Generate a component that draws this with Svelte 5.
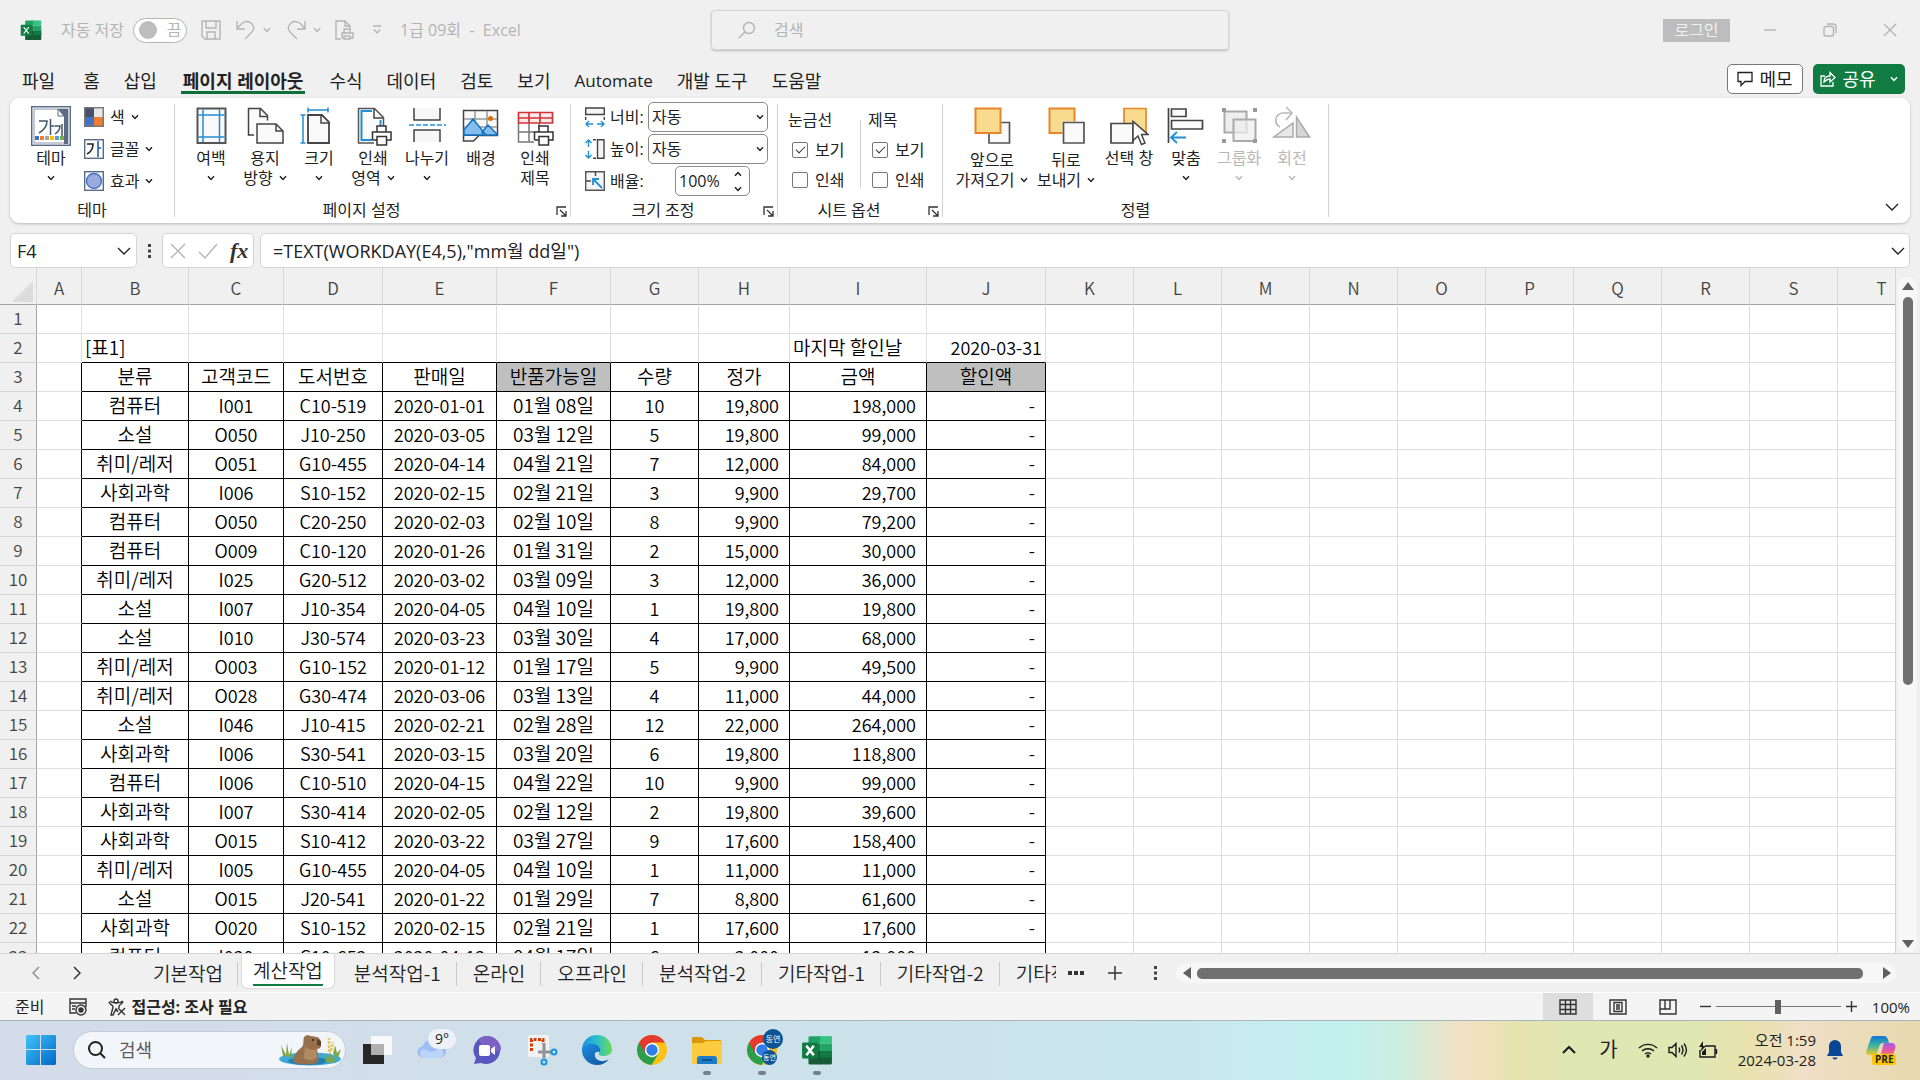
<script>
	const menuTabs = ['파일', '홈', '삽입', '페이지 레이아웃', '수식', '데이터', '검토', '보기', 'Automate', '개발 도구', '도움말'];

	const themeItems = [
		{ icon: 'colors', label: '색' },
		{ icon: 'fonts', label: '글꼴' },
		{ icon: 'effects', label: '효과' }
	];

	const pageItems = [
		{ icon: 'margins', lines: ['여백'], drop: 'below' },
		{ icon: 'orient', lines: ['용지', '방향'], drop: 'side' },
		{ icon: 'size', lines: ['크기'], drop: 'below' },
		{ icon: 'area', lines: ['인쇄', '영역'], drop: 'side' },
		{ icon: 'breaks', lines: ['나누기'], drop: 'below' },
		{ icon: 'background', lines: ['배경'] },
		{ icon: 'titles', lines: ['인쇄', '제목'] }
	];

	const arrangeItems = [
		{ icon: 'forward', lines: ['앞으로', '가져오기'], drop: 'side', size: 'w80' },
		{ icon: 'backward', lines: ['뒤로', '보내기'], drop: 'side', size: 'w68' },
		{ icon: 'pane', lines: ['선택 창'], size: 'w58' },
		{ icon: 'align', lines: ['맞춤'], drop: 'below', size: 'w56' },
		{ icon: 'group', lines: ['그룹화'], drop: 'below', size: 'w50', disabled: true },
		{ icon: 'rotate', lines: ['회전'], drop: 'below', size: 'w56', disabled: true }
	];

	const columns = [
		['A', 45], ['B', 107], ['C', 95], ['D', 99], ['E', 114], ['F', 114], ['G', 88], ['H', 91], ['I', 137], ['J', 119],
		['K', 88], ['L', 88], ['M', 88], ['N', 88], ['O', 88], ['P', 88], ['Q', 88], ['R', 88], ['S', 88], ['T', 88]
	];
	const tableWidth = 37 + columns.reduce((sum, c) => sum + c[1], 0);

	const rows = [
		[],
		['[표1]', '', '', '', '', '', '', '마지막 할인날', '2020-03-31'],
		['분류', '고객코드', '도서번호', '판매일', '반품가능일', '수량', '정가', '금액', '할인액'],
		['컴퓨터', 'I001', 'C10-519', '2020-01-01', '01월 08일', '10', '19,800', '198,000', '-'],
		['소설', 'O050', 'J10-250', '2020-03-05', '03월 12일', '5', '19,800', '99,000', '-'],
		['취미/레저', 'O051', 'G10-455', '2020-04-14', '04월 21일', '7', '12,000', '84,000', '-'],
		['사회과학', 'I006', 'S10-152', '2020-02-15', '02월 21일', '3', '9,900', '29,700', '-'],
		['컴퓨터', 'O050', 'C20-250', '2020-02-03', '02월 10일', '8', '9,900', '79,200', '-'],
		['컴퓨터', 'O009', 'C10-120', '2020-01-26', '01월 31일', '2', '15,000', '30,000', '-'],
		['취미/레저', 'I025', 'G20-512', '2020-03-02', '03월 09일', '3', '12,000', '36,000', '-'],
		['소설', 'I007', 'J10-354', '2020-04-05', '04월 10일', '1', '19,800', '19,800', '-'],
		['소설', 'I010', 'J30-574', '2020-03-23', '03월 30일', '4', '17,000', '68,000', '-'],
		['취미/레저', 'O003', 'G10-152', '2020-01-12', '01월 17일', '5', '9,900', '49,500', '-'],
		['취미/레저', 'O028', 'G30-474', '2020-03-06', '03월 13일', '4', '11,000', '44,000', '-'],
		['소설', 'I046', 'J10-415', '2020-02-21', '02월 28일', '12', '22,000', '264,000', '-'],
		['사회과학', 'I006', 'S30-541', '2020-03-15', '03월 20일', '6', '19,800', '118,800', '-'],
		['컴퓨터', 'I006', 'C10-510', '2020-04-15', '04월 22일', '10', '9,900', '99,000', '-'],
		['사회과학', 'I007', 'S30-414', '2020-02-05', '02월 12일', '2', '19,800', '39,600', '-'],
		['사회과학', 'O015', 'S10-412', '2020-03-22', '03월 27일', '9', '17,600', '158,400', '-'],
		['취미/레저', 'I005', 'G10-455', '2020-04-05', '04월 10일', '1', '11,000', '11,000', '-'],
		['소설', 'O015', 'J20-541', '2020-01-22', '01월 29일', '7', '8,800', '61,600', '-'],
		['사회과학', 'O020', 'S10-152', '2020-02-15', '02월 21일', '1', '17,600', '17,600', '-'],
		['컴퓨터', 'I020', 'C10-652', '2020-04-12', '04월 17일', '6', '2,000', '12,000', '-']
	];

	const sheets = ['기본작업', '계산작업', '분석작업-1', '온라인', '오프라인', '분석작업-2', '기타작업-1', '기타작업-2', '기타작업-3'];

	const apps = [
		{ icon: 'taskview', label: '작업 보기' },
		{ icon: 'weather', label: '날씨' },
		{ icon: 'chat', label: '채팅' },
		{ icon: 'snip', label: '캡처 도구' },
		{ icon: 'edge', label: 'Edge' },
		{ icon: 'chrome', label: 'Chrome' },
		{ icon: 'folder', label: '파일 탐색기', open: true },
		{ icon: 'chrome2', label: 'Chrome', open: true },
		{ icon: 'excel', label: 'Excel', open: true }
	];

	let fitWidth = $state('자동');
	let fitHeight = $state('자동');
	let scale = $state('100%');
	let formula = $state('=TEXT(WORKDAY(E4,5),"mm월 dd일")');
	let cellName = $state('F4');
	let zoomLevel = $state(50);

	// c is the zero-based column, r the zero-based row
	function cellClass(r, c) {
		const list = [];
		const inTable = c >= 1 && c <= 9;
		if (r >= 2 && inTable) list.push('boxed');
		if (r === 1 && inTable) list.push('over');
		if (r >= 2 && c === 0) list.push('before');
		if (r === 2 && (c === 5 || c === 9)) list.push('shade');
		if (r === 2 || (r > 2 && (c === 1 || c === 5)) || (r === 1 && c < 9)) list.push('hangul');
		if (r === 1 && c === 9) list.push('right');
		if (r === 1 && c < 9) list.push('left');
		if (r > 2 && c >= 7) list.push('num');
		return list.join(' ');
	}
</script>

{#snippet chev()}
	<svg class="chev" width="8" height="6" viewBox="0 0 8 6"><path d="M1 1.2 4 4.4 7 1.2" fill="none" stroke="currentColor" stroke-width="1.5" /></svg>
{/snippet}

{#snippet bigChev()}
	<svg width="14" height="8" viewBox="0 0 14 8"><path d="M1 1 7 7l6-6" fill="none" stroke="currentColor" stroke-width="1.4" /></svg>
{/snippet}

{#snippet launcher()}
	<button class="launcher" aria-label="대화 상자">
		<svg width="11" height="11" viewBox="0 0 11 11" fill="none" stroke="#333" stroke-width="1.3"><path d="M1 9V1h9M4 4l5.5 5.5M10 5v5H5" /></svg>
	</button>
{/snippet}

{#snippet excelLogo(size)}
	<svg width={size} height={size} viewBox="0 0 30 30">
		<path d="M8 2h11v7H7V3z" fill="#21a366" />
		<path d="M18 2h11v7H18z" fill="#33c481" />
		<path d="M7 9h11v7H7z" fill="#107c41" />
		<path d="M18 9h11v7H18z" fill="#21a366" />
		<path d="M7 16h22v11.500a1 1 0 0 1-1 1H8a1 1 0 0 1-1-1z" fill="#185c37" />
		<path d="M18 16h11v6H18z" fill="#107c41" />
		<rect x="1" y="8" width="15" height="15" rx="1" fill="#107c41" />
		<path d="m5 11 7 9M12 11l-7 9" stroke="#fff" stroke-width="2.400" />
	</svg>
{/snippet}

{#snippet chromeLogo()}
	<circle cx="15" cy="15" r="15" fill="#fbc116" />
	<path d="M15 15 2 7.500A15 15 0 0 0 14.500 30L21.500 18.700z" fill="#2c9e4b" />
	<path d="M2 7.500A15 15 0 0 1 28 7.500H15L8.500 18.700z" fill="#e33b2e" />
	<circle cx="15" cy="15" r="7.200" fill="#fff" />
	<circle cx="15" cy="15" r="5.700" fill="#2f7de9" />
{/snippet}

{#snippet ribbonIcon(name)}
	<svg width="40" height="40" viewBox="0 0 40 40" fill="none" stroke-width="1.500">
		{#if name === 'theme'}
			<rect x=".7" y=".7" width="38.600" height="38.600" fill="#fff" stroke="#5b6b86" />
			<rect x="3" y="3" width="34" height="34" stroke="#8b97ab" stroke-width="1" />
			<path d="M27 3h10v35h-4V10z" fill="#5b6b86" />
			<path d="M27 3v7h6z" fill="#fff" stroke="#5b6b86" stroke-width="1" />
			<path d="M8 15h8c0 6-3 9-8 12M19.500 13v16M19.500 20h4M24 20h5c0 4-2 6-5 8M31 18v12" stroke="#44546a" />
			<path d="M4 30h4v4H4z" fill="#4472c4" /><path d="M9 30h4v4H9z" fill="#ed7d31" /><path d="M14 30h4v4h-4z" fill="#a5a5a5" />
			<path d="M19 30h4v4h-4z" fill="#ffc000" /><path d="M24 30h4v4h-4z" fill="#5b9bd5" /><path d="M29 30h4v4h-4z" fill="#70ad47" />
		{:else if name === 'margins'}
			<rect x="6.500" y="2.500" width="28" height="34.500" fill="#fafafa" stroke="#555" stroke-width="2" />
			<path d="M12 3.500V36M28.500 3.500V36M7.500 9h26M7.500 31h26" stroke="#1f8fd6" />
		{:else if name === 'orient'}
			<path d="M9 29H3.500V2.500h12l7 7v5" fill="#fafafa" stroke="#444" /><path d="M15 2.500v8h8" stroke="#444" />
			<path d="M12 18h19l7 7v12H12z" fill="#fafafa" stroke="#444" /><path d="M31 18v7h7" stroke="#444" />
		{:else if name === 'size'}
			<path d="M9 9h14l7 7v21H9z" fill="#fafafa" stroke="#444" stroke-width="1.800" /><path d="M22 9v8h8" stroke="#444" />
			<path d="M9 4h20M9 1.500v5M29 1.500v5M4 9v28M1.500 9h5M1.500 37h5" stroke="#1f8fd6" />
		{:else if name === 'area'}
			<path d="M21 37H5.500V2.500h16l9 9V20" fill="#fafafa" stroke="#555" /><path d="M21 2.500V12h9" stroke="#444" />
			<path d="M19 34H8.500V5H19M27.500 14v6" stroke="#1f8fd6" stroke-width="2" />
			<path d="M24 26v-6h9v6M19.500 34v-8h18.500v8h-4M19.500 34h4.500M24 30.500h9.500V39H24z" fill="#fff" stroke="#333" />
		{:else if name === 'breaks'}
			<path d="M7 2v12h26V2M7 36V24h26v12" fill="#f7f7f7" stroke="#444" />
			<path d="M2 19h37" stroke="#1f8fd6" stroke-dasharray="5 2" />
		{:else if name === 'background'}
			<rect x="2.500" y="4.500" width="34" height="25" fill="#fafafa" stroke="#444" />
			<path d="M14 5v10M26 5v24M3 13h33M3 21h33" stroke="#999" />
			<path d="m3 24 9-11 13 16H3zM21 26l6-7 9 9v1H22z" fill="#83beec" stroke="#1272c4" />
			<circle cx="29.500" cy="12.500" r="2.500" fill="#e06c00" />
			<path d="M2.500 30v5h10l5-5" fill="#f7f7f7" stroke="#444" />
		{:else if name === 'titles'}
			<path d="M3.500 17v19H19M14 17v19M24 17v6M4 26h15" stroke="#777" />
			<path d="M3.500 6.500h34V17h-34zM14 7v10M25 7v10M4 12h33" fill="#fbeaea" stroke="#d13438" stroke-width="1.700" />
			<path d="M24 26v-6h9v6M19.500 34v-8h18.500v8h-4M19.500 34h4.500M24 30.500h9.500V39H24z" fill="#fff" stroke="#333" />
		{:else if name === 'forward'}
			<path d="M17 16.500h20.500V37H17z" fill="#fafafa" stroke="#555" stroke-width="1.700" />
			<path d="M3.500 2.500h25V27h-25z" fill="#f8db8f" stroke="#e8852b" stroke-width="2" />
		{:else if name === 'backward'}
			<path d="M3.500 2.500h25V27h-25z" fill="#f8db8f" stroke="#e8852b" stroke-width="2" />
			<path d="M16.500 15.500H39V38H16.500z" fill="#fff" />
			<path d="M17.500 16.500h20.500V37H17.500z" fill="#fafafa" stroke="#555" stroke-width="1.700" />
		{:else if name === 'pane'}
			<path d="M15 2.500h22V27H15z" fill="#f8db8f" stroke="#e8852b" stroke-width="1.700" />
			<path d="M2 17.500h22V37H2z" fill="#fafafa" stroke="#444" stroke-width="1.700" />
			<path d="M24 15.500v19l5-4.500 3.500 8.500 3.500-1.500-3.500-8.500h6.500z" fill="#fff" stroke="#444" stroke-width="1.500" />
		{:else if name === 'align'}
			<path d="M2.500 2v35" stroke="#444" stroke-width="1.700" />
			<path d="M5.500 3h14.500v7.500H5.500zM5.500 14.500H36.500V23H5.500z" fill="#fafafa" stroke="#444" stroke-width="1.700" />
			<path d="M20 31.500H6M11 26l-6 5.500 6 5.500" stroke="#1f8fd6" stroke-width="1.800" />
		{:else if name === 'group'}
			<path d="M5.500 5.500h22v21h-22z" fill="#eee" stroke="#aaa" stroke-width="2" />
			<path d="M14.500 13.500h22V35h-22z" fill="#eee" fill-opacity=".7" stroke="#aaa" stroke-width="2" />
			<path d="M3 2h4v4H3zM34 2h4v4h-4zM3 33h4v4H3zM34 33h4v4h-4z" fill="#999" />
		{:else if name === 'rotate'}
			<path d="M8 21c-6-3-6-13 3-14h8M14 1l6 6-6 7" stroke="#bbb" stroke-width="1.700" />
			<path d="M21 17v14H2z" fill="#e8e8e8" stroke="#aaa" /><path d="M24.500 11v20h13z" fill="#d5d5d5" stroke="#aaa" />
		{/if}
	</svg>
{/snippet}

{#snippet smallIcon(name)}
	<svg width="20" height="20" viewBox="0 0 20 20" fill="none" stroke-width="1.400">
		{#if name === 'colors'}
			<path d="M0 0h10v10H0z" fill="#44546a" /><path d="M10 0h10v10H10z" fill="#e7e6e6" /><path d="M0 10h10v10H0z" fill="#4472c4" /><path d="M10 10h10v10H10z" fill="#ed7d31" />
			<rect x=".7" y=".7" width="18.600" height="18.600" stroke="#777" />
		{:else if name === 'fonts'}
			<rect x=".7" y=".7" width="18.600" height="18.600" fill="#fff" stroke="#5b6b86" />
			<path d="M3 5h6c0 5-2 8-6 10" stroke="#222" stroke-width="1.600" /><path d="M14 2v16M14 9h3" stroke="#1f5fb0" stroke-width="1.600" />
		{:else if name === 'effects'}
			<rect x=".7" y=".7" width="18.600" height="18.600" fill="#fff" stroke="#5b6b86" />
			<circle cx="10" cy="10" r="7.500" fill="#9aaade" stroke="#4472c4" />
		{:else if name === 'fitw'}
			<path d="M.7 1h18.600v6.500H.7z" fill="#f5f5f5" stroke="#444" /><path d="M.7 10v3M19.300 10v3" stroke="#444" />
			<path d="M8 17H1.500M4 14l-3 3 3 3M12 17h6.500M16 14l3 3-3 3" stroke="#1f8fd6" />
		{:else if name === 'fith'}
			<path d="M12.500.7H19v18.600h-6.500z" fill="#f5f5f5" stroke="#444" /><path d="M8 .7h3M8 19.300h3" stroke="#444" />
			<path d="M3.500 8V1.500M.5 4l3-3 3 3M3.500 12v6.500M.5 16l3 3 3-3" stroke="#1f8fd6" />
		{:else if name === 'scale'}
			<path d="M.7.7h18.600v18.600H.7z" fill="#f5f5f5" stroke="#555" /><path d="M1 10h5M10.500 1v4" stroke="#444" />
			<path d="m17 17-9-9M8 14V8h6" stroke="#1f8fd6" stroke-width="1.800" />
		{/if}
	</svg>
{/snippet}

{#snippet largeButton(item)}
	<button class="large {item.size ?? ''}" disabled={item.disabled}>
		{@render ribbonIcon(item.icon)}
		<span>{item.lines[0]}</span>
		<span class="second">
			{item.lines[1] ?? ''}
			{#if item.drop}{@render chev()}{/if}
		</span>
	</button>
{/snippet}

{#snippet appIcon(name)}
	{#if name === 'excel'}
		{@render excelLogo(32)}
	{:else}
		<svg width="30" height="30" viewBox="0 0 30 30" overflow="visible">
			{#if name === 'taskview'}
				<path d="M1 9h21v20H1z" fill="#272727" /><path d="M9 1h21v19H9z" fill="#f8f8f8" /><path d="M9 9h13v11H9z" fill="#b0b0b0" />
			{:else if name === 'weather'}
				<path d="M7 23a6 6 0 0 1-1-12 8 8 0 0 1 15-2 7 7 0 0 1 2 14z" fill="#9dbdf5" />
				<path d="M6 23a5 5 0 0 1 0-9c4 0 6 3 9 3s5-4 9-3a5 5 0 0 1-1 9z" fill="#bcd3fa" />
			{:else if name === 'chat'}
				<path d="M15 1a14 14 0 1 1-6 27l-7 1 2-6A14 14 0 0 1 15 1z" fill="#5b57c0" />
				<path d="M15 1a14 14 0 0 1 14 14c-8 4-20-2-22-11a14 14 0 0 1 8-3z" fill="#7b62c4" />
				<rect x="7" y="10" width="11" height="11" rx="2" fill="#fff" /><path d="m19 14 4-3v9l-4-3z" fill="#fff" />
			{:else if name === 'snip'}
				<rect x="1" y="0" width="21" height="22" rx="2" fill="#f2f2f2" />
				<path d="M4.500 16V4.500H16V9" fill="none" stroke="#d83b01" stroke-width="3" stroke-dasharray="3 1.500" />
				<path d="M17 8v15M11 17h14" stroke="#8d9296" stroke-width="3" />
				<circle cx="27" cy="17" r="2.500" fill="none" stroke="#1596dd" stroke-width="2" /><circle cx="17" cy="27" r="2.500" fill="none" stroke="#1596dd" stroke-width="2" />
			{:else if name === 'edge'}
				<defs>
					<linearGradient id="edgeTop" x1="0" x2="1"><stop offset="0" stop-color="#1b8fe0" /><stop offset=".5" stop-color="#2cbfd0" /><stop offset="1" stop-color="#6bdc50" /></linearGradient>
					<linearGradient id="edgeLow" x1="0" y1="0" x2="1" y2="1"><stop offset="0" stop-color="#1f8fe0" /><stop offset="1" stop-color="#0d4f9e" /></linearGradient>
				</defs>
				<path d="M15 0a15 15 0 0 1 15 14c0 5-4 7-8 7-4 0-6-1-5-3 2-3 0-7-5-7C6 11 2 14 0 17A15 15 0 0 1 15 0z" fill="url(#edgeTop)" />
				<path d="M0 16c1-5 6-8 11-7 5 0 8 4 7 8-4-1-6 1-5 4 1 5 8 7 14 3a15 15 0 0 1-12 6A15 15 0 0 1 0 16z" fill="url(#edgeLow)" />
			{:else if name === 'chrome'}
				{@render chromeLogo()}
			{:else if name === 'folder'}
				<path d="M0 3a1 1 0 0 1 1-1h9l3 3h16v6H0z" fill="#d9970a" />
				<path d="M0 8h11l3-2h16v22a1 1 0 0 1-1 1H1a1 1 0 0 1-1-1z" fill="#fcca3e" />
				<path d="M5 29v-5a3 3 0 0 1 3-3h14a3 3 0 0 1 3 3v5z" fill="#1c7cc9" /><path d="M10 25h10" stroke="#0b4a80" stroke-width="1.500" />
			{:else if name === 'chrome2'}
				{@render chromeLogo()}
				<circle cx="26" cy="4" r="10" fill="#0d5494" /><circle cx="22.500" cy="22.500" r="7.500" fill="#0d5494" />
				<text x="26" y="7" fill="#fff" font-size="8" text-anchor="middle">동연</text>
				<text x="22.500" y="25" fill="#fff" font-size="7" text-anchor="middle">동연</text>
			{/if}
		</svg>
	{/if}
{/snippet}

<div class="window">
	<header class="titlebar">
		<div class="quick">
			{@render excelLogo(22)}
			<label class="autosave">자동 저장 <button class="toggle" role="switch" aria-checked="false"><i></i>끔</button></label>
			<button class="q save" aria-label="저장"><svg width="20" height="20" viewBox="0 0 20 20"><path d="M1 1h18v18H4l-3-3zM5 1v7h10V1M6 19v-7h8v7" /></svg></button>
			<button class="q undo" aria-label="실행 취소"><svg width="20" height="20" viewBox="0 0 20 20"><path d="M1 1v8h8M1.500 8.500C6 1 12 0 15.500 3.500c4 4 2 7-1 10L9 19" /></svg>{@render chev()}</button>
			<button class="q redo" aria-label="다시 실행"><svg width="20" height="20" viewBox="0 0 20 20"><path d="M19 1v8h-8M18.500 8.500C14 1 8 0 4.500 3.500c-4 4-2 7 1 10L11 19" /></svg>{@render chev()}</button>
			<button class="q print" aria-label="인쇄 미리 보기"><svg width="20" height="20" viewBox="0 0 20 20"><path d="M6 19H1V1h9l5 5v3M10 1v5h5M9 13V9h6v4M7 18v-5h11v5h-3M7 18h2M9 16h6v3H9z" /></svg></button>
			<button class="q more" aria-label="사용자 지정"><svg width="10" height="10" viewBox="0 0 10 10"><path d="M1 1h8M2 4.500 5 8l3-3.500" /></svg></button>
			<span class="doc">1급 09회 &nbsp;-&nbsp; Excel</span>
		</div>
		<label class="search">
			<svg width="18" height="18" viewBox="0 0 18 18"><circle cx="11" cy="7" r="5.500" /><path d="m7 11-6 6" /></svg>
			<input type="text" placeholder="검색" aria-label="검색" />
		</label>
		<div class="winctl">
			<button class="login">로그인</button>
			<button aria-label="최소화"><svg width="14" height="14" viewBox="0 0 14 14"><path d="M1 7h12" /></svg></button>
			<button aria-label="이전 크기로"><svg width="14" height="14" viewBox="0 0 14 14"><rect x="1" y="3.500" width="9.500" height="9.500" rx="2" /><path d="M4 1h6a3 3 0 0 1 3 3v6" /></svg></button>
			<button aria-label="닫기"><svg width="14" height="14" viewBox="0 0 14 14"><path d="m1 1 12 12M13 1 1 13" /></svg></button>
		</div>
	</header>

	<nav class="menu">
		{#each menuTabs as tab, i}
			<button class:file={i === 0} class:active={i === 3} class:latin={tab === 'Automate'}>{tab}</button>
		{/each}
		<div class="share">
			<button class="memo"><svg width="16" height="16" viewBox="0 0 16 16"><path d="M1 1.500h14v9H8l-4 4v-4H1z" /></svg>메모</button>
			<button class="green"><svg width="16" height="16" viewBox="0 0 16 16"><path d="M5 5H1v10h12v-4M4 11c0-4 2-6 6-6V1.500L15 6.500 10 11V8c-3 0-4 1-6 3z" /></svg>공유{@render chev()}</button>
		</div>
	</nav>

	<section class="ribbon">
		<div class="group themes">
			<div class="body">
				{@render largeButton({ icon: 'theme', lines: ['테마'], drop: 'below' })}
				<div class="stack">
					{#each themeItems as item}
						<button class="small">{@render smallIcon(item.icon)}<span>{item.label}</span>{@render chev()}</button>
					{/each}
				</div>
			</div>
			<footer>테마</footer>
		</div>

		<div class="group page">
			<div class="body">
				{#each pageItems as item}{@render largeButton(item)}{/each}
			</div>
			<footer>페이지 설정{@render launcher()}</footer>
		</div>

		<div class="group fit">
			<div class="body stack">
				<div class="field">
					{@render smallIcon('fitw')}<label for="fitw">너비:</label>
					<div class="combo"><select id="fitw" bind:value={fitWidth}><option>자동</option><option>1페이지</option></select>{@render chev()}</div>
				</div>
				<div class="field">
					{@render smallIcon('fith')}<label for="fith">높이:</label>
					<div class="combo"><select id="fith" bind:value={fitHeight}><option>자동</option><option>1페이지</option></select>{@render chev()}</div>
				</div>
				<div class="field">
					{@render smallIcon('scale')}<label for="scale">배율:</label>
					<div class="spin">
						<input id="scale" type="text" bind:value={scale} />
						<div>
							<button class="up" aria-label="늘리기">{@render chev()}</button>
							<button aria-label="줄이기">{@render chev()}</button>
						</div>
					</div>
				</div>
			</div>
			<footer>크기 조정{@render launcher()}</footer>
		</div>

		<div class="group sheetopt">
			<div class="body">
				{#each ['눈금선', '제목'] as title}
					<fieldset>
						<legend>{title}</legend>
						<label><input type="checkbox" checked />보기</label>
						<label><input type="checkbox" />인쇄</label>
					</fieldset>
				{/each}
			</div>
			<footer>시트 옵션{@render launcher()}</footer>
		</div>

		<div class="group arrange">
			<div class="body">
				{#each arrangeItems as item}{@render largeButton(item)}{/each}
			</div>
			<footer>정렬</footer>
		</div>
		<button class="collapse" aria-label="리본 축소">{@render bigChev()}</button>
	</section>

	<section class="formulabar">
		<label class="namebox"><input type="text" aria-label="이름 상자" bind:value={cellName} />{@render bigChev()}</label>
		<svg class="grip" width="4" height="16" viewBox="0 0 4 16"><path d="M0 1h3v3H0zM0 6.500h3v3H0zM0 12h3v3H0z" fill="#444" /></svg>
		<div class="fxbox">
			<button aria-label="취소"><svg width="16" height="16" viewBox="0 0 16 16"><path d="m1 1 14 14M15 1 1 15" stroke="#b5b5b5" /></svg></button>
			<button aria-label="입력"><svg width="20" height="16" viewBox="0 0 20 16"><path d="m1 9 6 6L19 1" stroke="#b5b5b5" /></svg></button>
			<button class="fx" aria-label="함수 삽입">fx</button>
		</div>
		<label class="formula"><input type="text" aria-label="수식" bind:value={formula} />{@render bigChev()}</label>
	</section>

	<main>
		<div class="sheet">
			<table style="width: {tableWidth}px">
				<colgroup>
					<col class="rowcol" />
					{#each columns as col}<col style="width: {col[1]}px" />{/each}
				</colgroup>
				<thead>
					<tr>
						<th class="corner"><svg width="21" height="21" viewBox="0 0 21 21"><path d="M21 0v21H0z" fill="#dcdcdc" /></svg></th>
						{#each columns as col}<th>{col[0]}</th>{/each}
					</tr>
				</thead>
				<tbody>
					{#each rows as row, r}
						<tr>
							<th>{r + 1}</th>
							{#each columns as _, c}
								<td class={cellClass(r, c)}>{row[c - 1] ?? ''}</td>
							{/each}
						</tr>
					{/each}
				</tbody>
			</table>
		</div>
		<div class="vscroll">
			<button aria-label="위로"><svg width="12" height="8" viewBox="0 0 12 8"><path d="M6 0l6 8H0z" /></svg></button>
			<div class="track"><div class="thumb"></div></div>
			<button aria-label="아래로"><svg width="12" height="8" viewBox="0 0 12 8"><path d="M6 8l6-8H0z" /></svg></button>
		</div>
	</main>

	<nav class="sheetbar">
		<button class="arrow dim" aria-label="이전 시트"><svg width="8" height="14" viewBox="0 0 8 14"><path d="M7 1 1 7l6 6" /></svg></button>
		<button class="arrow" aria-label="다음 시트"><svg width="8" height="14" viewBox="0 0 8 14"><path d="m1 1 6 6-6 6" /></svg></button>
		<div class="tabs">
			{#each sheets as name, i}
				<button class:active={i === 1} class:first={i === 0}><span>{name}</span></button>
			{/each}
		</div>
		<button class="dots" aria-label="시트 목록"><svg width="16" height="4" viewBox="0 0 16 4"><path d="M0 0h4v4H0zM6 0h4v4H6zM12 0h4v4h-4z" /></svg></button>
		<button class="plus" aria-label="새 시트"><svg width="14" height="14" viewBox="0 0 14 14"><path d="M7 0v14M0 7h14" /></svg></button>
		<svg class="vdots" width="4" height="14" viewBox="0 0 4 14"><path d="M0 0h3v3H0zM0 5.500h3v3H0zM0 11h3v3H0z" fill="#444" /></svg>
		<div class="hscroll">
			<button aria-label="왼쪽"><svg width="8" height="12" viewBox="0 0 8 12"><path d="M0 6l8-6v12z" /></svg></button>
			<div class="track"><div class="thumb"></div></div>
			<button aria-label="오른쪽"><svg width="8" height="12" viewBox="0 0 8 12"><path d="M8 6 0 0v12z" /></svg></button>
		</div>
	</nav>

	<footer class="status">
		<span>준비</span>
		<button class="macro" aria-label="매크로 기록"><svg width="18" height="18" viewBox="0 0 18 18"><path d="M1 1h16v4H1zM1 5v10h6M17 5v4M3 8h4M3 11h3" /><circle cx="12" cy="12" r="5" /><circle cx="12" cy="12" r="2" fill="#333" /></svg></button>
		<button class="access"><svg width="18" height="18" viewBox="0 0 18 18"><circle cx="8" cy="3" r="2" /><path d="M1 4c1 3 4 3 4 5l-2 8h2l3-6 2 3M15 4c-1 2-4 3-4 4l0 2M2 3c2 2 10 3 13 0M10 10l7 7M17 10l-7 7" /></svg>접근성: 조사 필요</button>
		<div class="views">
			<button class="on" aria-label="기본"><svg width="18" height="16" viewBox="0 0 18 16"><path d="M1 1h16v14H1zM6.500 1v14M11.500 1v14M1 5.500h16M1 10.500h16" /></svg></button>
			<button aria-label="페이지 레이아웃"><svg width="18" height="16" viewBox="0 0 18 16"><path d="M1 1h16v14H1zM5 3.500h8v9H5zM7 6h4M7 8h4M7 10h4" /></svg></button>
			<button aria-label="페이지 나누기 미리 보기"><svg width="18" height="16" viewBox="0 0 18 16"><path d="M1 1h16v14H1zM1 10h10V1M6 1v9" /></svg></button>
		</div>
		<button class="sign" aria-label="축소"><svg width="11" height="11" viewBox="0 0 11 11"><path d="M0 5.500h11" /></svg></button>
		<input type="range" aria-label="확대/축소" bind:value={zoomLevel} />
		<button class="sign" aria-label="확대"><svg width="11" height="11" viewBox="0 0 11 11"><path d="M0 5.500h11M5.500 0v11" /></svg></button>
		<span class="percent">100%</span>
	</footer>

	<footer class="taskbar">
		<button class="start" aria-label="시작">
			<svg width="30" height="30" viewBox="0 0 30 30">
				<defs><linearGradient id="win" x1="0" y1="0" x2="1" y2="1"><stop offset="0" stop-color="#41c4f7" /><stop offset="1" stop-color="#0067c8" /></linearGradient></defs>
				<path d="M1 0h13v14H0V1zM15 0h14l1 1v13H15zM0 15h14v15H1l-1-1zM15 15h15v14l-1 1H15z" fill="url(#win)" />
			</svg>
		</button>
		<label class="find">
			<svg width="20" height="20" viewBox="0 0 20 20"><circle cx="8.500" cy="8.500" r="6.500" /><path d="m13 13 5 5" /></svg>
			<input type="text" placeholder="검색" aria-label="작업 표시줄 검색" />
			<svg class="capy" width="62" height="32" viewBox="0 0 62 32">
				<ellipse cx="31" cy="25" rx="31" ry="6.500" fill="#3fa9d6" /><ellipse cx="29" cy="27" rx="20" ry="4" fill="#237fae" />
				<path d="M14 28c0-7 5-12 9-15 2-2 1-7 2-10l3-2 4 1 6 1c3 1 4 4 4 8 0 3-2 4-4 4l1 6c1 4 0 6-1 8-7 2-18 2-24-1z" fill="#97714e" />
				<path d="M26 12c3 4 8 5 11 3l1 8c-4 4-9 4-13 1z" fill="#b08a63" />
				<circle cx="34" cy="6" r="1" fill="#2b1b10" /><path d="M38 5l4 2v5l-4-1z" fill="#5c412b" />
				<path d="M4 22 2 11l5 10 1-12 2 12 3-8-1 10zM47 28l-2-9 4 6 2-8 2 9 4-6-2 9zM54 20l2-9 2 8 4-4-3 9z" fill="#7ea746" />
				<path d="M50 18V4M52 17l2-9" stroke="#eec65a" stroke-width="2.500" stroke-dasharray="3 1" />
			</svg>
		</label>
		{#each apps as app}
			<button class="app" class:open={app.open} aria-label={app.label}>
				{@render appIcon(app.icon)}
				{#if app.icon === 'weather'}<span class="temp">9°</span>{/if}
			</button>
		{/each}
		<div class="tray">
			<button class="up" aria-label="숨겨진 아이콘"><svg width="14" height="9" viewBox="0 0 14 9"><path d="m1 8 6-6 6 6" /></svg></button>
			<button class="ime">가</button>
			<button class="net" aria-label="네트워크">
				<svg width="20" height="16" viewBox="0 0 20 16"><path d="M1 6a13 13 0 0 1 18 0M4 9a9 9 0 0 1 12 0M7 12a5 5 0 0 1 6 0" /><circle cx="10" cy="14" r="1" /></svg>
				<svg width="20" height="16" viewBox="0 0 20 16"><path d="M1 5.500h3l4-4v13l-4-4H1zM11 5.500c1 2 1 3 0 5M13.500 3.500c2 3 2 6 0 9M16 1.500c3 4 3 9 0 13" /></svg>
				<svg width="20" height="18" viewBox="0 0 20 18"><path d="M7 5h10v11H2V9M18.500 8v5" /><path d="M5 0 1 6h3l-2 5 6-6H5z" fill="#1a1a1a" stroke="none" /><path d="M4 14v-3l4-4v7z" fill="#1a1a1a" stroke="none" /></svg>
			</button>
			<button class="clock"><span>오전 1:59</span><span>2024-03-28</span></button>
			<button class="bell" aria-label="알림"><svg width="16" height="20" viewBox="0 0 16 20"><path d="M8 0a6 6 0 0 1 6 6v6l2 4H0l2-4V6a6 6 0 0 1 6-6zM5.500 17.500h5a2.500 2 0 0 1-5 0z" fill="#0a4695" stroke="none" /></svg></button>
			<button class="copilot" aria-label="Copilot">
				<svg width="30" height="30" viewBox="0 0 30 30">
					<defs>
						<linearGradient id="copA" x1="0" y1="0" x2="0" y2="1"><stop offset="0" stop-color="#1673d8" /><stop offset=".5" stop-color="#38b6a0" /><stop offset="1" stop-color="#f3c623" /></linearGradient>
						<linearGradient id="copB" x1="0" y1="0" x2="0" y2="1"><stop offset="0" stop-color="#a45cf0" /><stop offset=".5" stop-color="#e8559b" /><stop offset="1" stop-color="#f9a13c" /></linearGradient>
					</defs>
					<path d="M8 1h10c3 0 4 3 5 7h-6c-2 0-3 1-4 4l-2 6c-1 2-2 2-4 2H3c-3 0-3-3-2-6L5 3c1-2 2-2 3-2z" fill="url(#copA)" stroke="none" />
					<path d="M19 8h7c3 0 4 3 3 6l-3 9H14l3-12c0-2 1-3 2-3z" fill="url(#copB)" stroke="none" />
				</svg>
				<span>PRE</span>
			</button>
		</div>
	</footer>
</div>

<style>
	:global(body) {
		background: #f0f0f0;
	}

	.window {
		display: flex;
		flex-direction: column;
		height: 100vh;
		overflow: hidden;
		background: #f0f0f0;
		color: #222;
		font-family: 'Open Sans', 'Noto Sans CJK KR', sans-serif;
		font-size: 16px;
		line-height: 20px;
	}

	button, input, select {
		font: inherit;
		color: inherit;
		background: none;
		border: 0;
		margin: 0;
		padding: 0;
		outline: 0;
	}

	button {
		display: flex;
		align-items: center;
		justify-content: center;
		white-space: nowrap;
	}

	input {
		min-width: 0;
	}

	svg {
		flex: none;
		display: block;
	}

	/* title bar */
	.titlebar {
		display: grid;
		grid-template-columns: 1fr 518px 1fr;
		align-items: center;
		height: 60px;
		padding-left: 20px;
		color: #b4b4b4;
	}

	.titlebar svg path, .titlebar svg circle, .titlebar svg rect {
		stroke-width: 1.4;
	}

	.quick, .winctl, .autosave {
		display: flex;
		align-items: center;
	}

	.autosave {
		margin-left: 19px;
		gap: 9px;
	}

	.toggle {
		box-sizing: border-box;
		width: 54px;
		height: 25px;
		border: 1px solid #b4b4b4;
		border-radius: 13px;
		background: #fff;
		gap: 10px;
	}

	.toggle i {
		width: 18px;
		height: 18px;
		border-radius: 50%;
		background: #bdbdbd;
	}

	.q svg, .search svg, .winctl svg {
		fill: none;
		stroke: #b4b4b4;
	}

	.q {
		gap: 7px;
		margin-left: 14px;
	}

	.undo, .redo {
		margin-left: 15px;
	}

	.more {
		margin-left: 17px;
	}

	.doc {
		margin-left: 18px;
		white-space: nowrap;
	}

	.search {
		display: flex;
		align-items: center;
		gap: 18px;
		box-sizing: border-box;
		height: 40px;
		padding: 0 26px;
		border: 1px solid #d4d4d4;
		border-radius: 4px;
		box-shadow: 0 1px 2px #bbb;
	}

	.search input {
		flex: 1;
	}

	.search input::placeholder {
		color: #b4b4b4;
		opacity: 1;
	}

	.winctl {
		justify-content: flex-end;
		padding-right: 23px;
		gap: 46px;
	}

	.login {
		width: 67px;
		height: 23px;
		margin-right: -13px;
		background: #bdbdbd;
		color: #f0f0f0;
	}

	/* menu */
	.menu {
		display: flex;
		align-items: center;
		gap: 24px;
		height: 38px;
		padding: 0 15px 0 22px;
		font-size: 18px;
	}

	.menu > button {
		height: 26px;
		margin-top: 3px;
		padding-top: 3px;
		border-bottom: 3px solid transparent;
	}

	.menu > .file {
		margin-right: 4px;
	}

	.menu > .latin {
		font-size: 17px;
	}

	.menu > .active {
		padding: 3px 2px 0;
		font-weight: 700;
		border-bottom-color: #0f703b;
	}

	.share {
		display: flex;
		gap: 10px;
		margin-left: auto;
	}

	.share button {
		box-sizing: border-box;
		height: 30px;
		border-radius: 5px;
		gap: 6px;
	}

	.share svg {
		fill: none;
		stroke: currentColor;
		stroke-width: 1.3;
	}

	.memo {
		width: 76px;
		border: 1px solid #777;
		background: #fff;
	}

	.green {
		width: 92px;
		background: #107c41;
		color: #fff;
	}

	.green .chev {
		margin-left: 8px;
	}

	/* ribbon */
	.ribbon {
		display: flex;
		flex: none;
		box-sizing: border-box;
		height: 125px;
		margin: 0 10px;
		border-radius: 9px;
		background: #fff;
		box-shadow: 0 1px 3px #bbb;
		position: relative;
	}

	.group {
		display: flex;
		flex-direction: column;
		box-sizing: border-box;
		margin: 6px 0;
		border-right: 1px solid #d2d2d2;
		flex: none;
	}

	.group footer {
		position: relative;
		text-align: center;
		height: 18px;
		line-height: 22px;
	}

	.body {
		display: flex;
		flex: 1;
	}

	.themes { width: 165px; }
	.page { width: 396px; }
	.fit { width: 207px; }
	.sheetopt { width: 165px; }
	.arrange { width: 386px; }

	.page footer, .fit footer, .sheetopt footer { padding-right: 22px; }

	.themes .body { padding-left: 14px; }
	.page .body, .arrange .body { padding-left: 9px; }

	.large {
		flex-direction: column;
		justify-content: flex-start;
		align-items: center;
		width: 54px;
		padding-top: 2px;
	}

	.w80 { width: 80px; }
	.w68 { width: 68px; }
	.w58 { width: 58px; }
	.w56 { width: 56px; }
	.w50 { width: 50px; }

	.large span {
		margin-top: 2px;
	}

	.w80 svg + span, .w68 svg + span {
		margin-top: 4px;
	}

	.large .second {
		display: flex;
		align-items: center;
		gap: 6px;
		height: 20px;
		margin-top: 0;
	}

	.large:disabled {
		color: #b8b8b8;
	}

	.launcher {
		position: absolute;
		right: 3px;
		bottom: 0;
	}

	.stack {
		display: flex;
		flex-direction: column;
		gap: 2px;
		margin-top: -2px;
	}

	.themes .stack {
		margin-left: 6px;
	}

	.small {
		height: 30px;
		justify-content: flex-start;
		gap: 6px;
	}

	.fit .stack {
		padding-left: 14px;
	}

	.field {
		display: flex;
		align-items: center;
		height: 30px;
	}

	.field label {
		width: 38px;
		padding-left: 5px;
		white-space: nowrap;
	}

	.combo, .spin {
		display: flex;
		align-items: center;
		box-sizing: border-box;
		width: 120px;
		height: 30px;
		border: 1px solid #8a8a8a;
		border-radius: 5px;
		position: relative;
		background: #fff;
	}

	.combo select {
		appearance: none;
		width: 100%;
		height: 28px;
		padding: 0 3px;
	}

	.combo .chev {
		position: absolute;
		right: 3px;
		pointer-events: none;
	}

	.spin {
		width: 75px;
		margin-left: 27px;
		padding: 0 7px 0 3px;
	}

	.spin input {
		flex: 1;
		width: 40px;
	}

	.spin div {
		display: flex;
		flex-direction: column;
		gap: 9px;
	}

	.spin .up .chev {
		transform: rotate(180deg);
	}

	.sheetopt .body {
		padding-left: 10px;
	}

	fieldset {
		display: flex;
		flex-direction: column;
		gap: 10px;
		width: 72px;
		height: 78px;
		margin: 6px 0 0;
		padding: 0;
		border: 0;
		box-sizing: border-box;
	}

	fieldset + fieldset {
		padding-left: 7px;
		border-left: 1px solid #d2d2d2;
	}

	legend {
		padding: 0;
		margin-bottom: 10px;
	}

	fieldset label {
		display: flex;
		align-items: center;
		gap: 7px;
		padding-left: 4px;
	}

	input[type='checkbox'] {
		appearance: none;
		box-sizing: border-box;
		width: 16px;
		height: 16px;
		border: 1px solid #777;
		border-radius: 2px;
		background: #fff;
		display: flex;
		justify-content: center;
	}

	input[type='checkbox']:checked::after {
		content: '';
		width: 4px;
		height: 8px;
		margin-top: 1px;
		border: solid #333;
		border-width: 0 1px 1px 0;
		transform: rotate(45deg);
	}

	.collapse {
		margin: auto 11px 12px auto;
	}

	/* formula bar */
	.formulabar {
		display: flex;
		align-items: center;
		flex: none;
		height: 35px;
		margin: 10px 10px 0;
		font-size: 18px;
	}

	.namebox, .fxbox, .formula {
		display: flex;
		align-items: center;
		box-sizing: border-box;
		height: 35px;
		border: 1px solid #d4d4d4;
		border-radius: 5px;
		background: #fff;
	}

	.namebox {
		width: 127px;
		padding: 0 5px 0 6px;
	}

	.namebox input, .formula input {
		flex: 1;
	}

	.grip {
		margin: 0 10px 0 11px;
	}

	.fxbox {
		width: 92px;
		gap: 12px;
		padding-left: 7px;
	}

	.fxbox path {
		fill: none;
		stroke-width: 1.4;
	}

	.fx {
		font: italic 700 22px 'Liberation Serif', serif;
		color: #333;
	}

	.formula {
		flex: 1;
		margin-left: 6px;
		padding: 0 4px 0 12px;
	}

	/* sheet */
	main {
		display: flex;
		flex: 1;
		min-height: 0;
		border-bottom: 1px solid #d4d4d4;
	}

	.sheet {
		flex: 1;
		min-width: 0;
		overflow: hidden;
		border-right: 1px solid #d4d4d4;
	}

	table {
		table-layout: fixed;
		border-collapse: separate;
		border-spacing: 0;
		font-family: 'Noto Sans CJK KR', sans-serif;
		font-weight: 350;
		font-size: 18px;
		color: #000;
	}

	.rowcol {
		width: 37px;
	}

	th, td {
		box-sizing: border-box;
		height: 29px;
		padding: 0 0 2px;
		overflow: hidden;
		white-space: nowrap;
		text-align: center;
		line-height: 24px;
		border-right: 1px solid #dedede;
		border-bottom: 1px solid #dedede;
	}

	th {
		background: #f0f0f0;
		color: #444;
		font-weight: inherit;
		font-size: 17px;
		border-bottom-color: #d4d4d4;
	}

	tbody th {
		border-right-color: #a6a6a6;
	}

	thead th {
		height: 37px;
		padding-top: 6px;
		border-bottom-color: #a6a6a6;
		border-right-color: #d8d8d8;
	}

	.corner svg {
		margin: 6px 0 0 12px;
	}

	td {
		background: #fff;
	}

	.boxed {
		border-color: #000;
	}

	.over {
		border-bottom-color: #000;
	}

	.before {
		border-right-color: #000;
	}

	.shade {
		background: #bfbfbf;
	}

	.hangul {
		font-size: 19px;
	}

	.left {
		text-align: left;
		padding-left: 3px;
	}

	.right {
		text-align: right;
		padding-right: 3px;
	}

	.num {
		text-align: right;
		padding-right: 10px;
	}

	.vscroll {
		display: flex;
		flex-direction: column;
		align-items: center;
		width: 19px;
		margin: 9px 3px 0 2px;
		padding: 5px 0;
		box-sizing: border-box;
		border-radius: 10px;
		background: #f7f7f7;
	}

	.track {
		flex: 1;
		display: flex;
	}

	.thumb {
		border-radius: 5px;
		background: #707070;
	}

	.vscroll .track {
		margin: 7px 0;
	}

	.vscroll .thumb {
		width: 10px;
		height: 61%;
	}

	.vscroll svg, .hscroll svg {
		fill: #606060;
	}

	/* sheet tabs */
	.sheetbar {
		display: flex;
		align-items: center;
		flex: none;
		height: 39px;
		box-sizing: border-box;
		border-bottom: 1px solid #fff;
		padding: 0 24px 0 32px;
		font-size: 19px;
	}

	.arrow path, .plus path {
		fill: none;
		stroke: #333;
		stroke-width: 1.5;
	}

	.arrow + .arrow {
		margin-left: 33px;
	}

	.dim {
		opacity: 0.5;
	}

	.tabs {
		display: flex;
		align-self: stretch;
		width: 919px;
		margin-left: 56px;
		overflow: hidden;
		font-family: 'Noto Sans CJK KR', sans-serif;
		font-weight: 350;
	}

	.tabs button {
		position: relative;
		flex: none;
		height: 38px;
		padding: 0 16px;
	}

	.tabs button::after {
		content: '';
		position: absolute;
		right: 0;
		top: 8px;
		height: 24px;
		border-right: 1px solid #c8c8c8;
	}

	.tabs .first {
		padding: 0 15px 0 16px;
	}

	.tabs .active {
		height: 34px;
		margin: 0 4px;
		padding: 0 11px;
		border-radius: 0 0 6px 6px;
		background: #fff;
		box-shadow: 0 0 2px #aaa;
	}

	.tabs .active::after {
		display: none;
	}

	.active span {
		margin-top: 1px;
		padding-bottom: 2px;
		line-height: 24px;
		border-bottom: 2px solid #107c41;
	}

	.dots {
		margin-left: 12px;
	}

	.dots path {
		fill: #333;
	}

	.plus {
		margin-left: 24px;
	}

	.vdots {
		margin-left: 32px;
	}

	.hscroll {
		display: flex;
		align-items: center;
		flex: 1;
		height: 20px;
		margin-left: 18px;
		padding: 0 5px 0 7px;
		border-radius: 10px;
		background: #f7f7f7;
	}

	.hscroll .track {
		margin: 0 6px;
	}

	.hscroll .thumb {
		width: 98%;
		height: 11px;
	}

	/* status bar */
	.status {
		display: flex;
		align-items: center;
		flex: none;
		height: 27px;
		padding: 0 10px 0 15px;
		background: #f4f4f4;
	}

	.status svg {
		fill: none;
		stroke: #333;
		stroke-width: 1.4;
	}

	.macro {
		margin-left: 25px;
	}

	.access {
		margin-left: 21px;
		gap: 5px;
		font-weight: 700;
	}

	.views {
		display: flex;
		align-self: stretch;
		margin: 0 2px 0 auto;
	}

	.views button {
		width: 50px;
	}

	.views .on {
		background: #dedede;
	}

	.sign {
		margin: 0 5px;
	}

	input[type='range'] {
		appearance: none;
		width: 125px;
		height: 16px;
		background: linear-gradient(#777, #777) center / 100% 1px no-repeat;
	}

	input[type='range']::-webkit-slider-thumb {
		appearance: none;
		width: 6px;
		height: 14px;
		background: #606060;
	}

	.percent {
		margin-left: 10px;
		font-size: 15px;
	}

	/* taskbar */
	.taskbar {
		display: flex;
		align-items: center;
		flex: none;
		box-sizing: border-box;
		height: 60px;
		padding: 0 0 2px 26px;
		border-top: 1px solid #a9b7bd;
		background: linear-gradient(90deg, #d4dbe9 0%, #d0dfe9 25%, #cbe3ea 48%, #c9e8ed 62%, #c3f0ef 70%, #cdeee0 73%, #f0e2c4 76%, #efe1bd 77%, #e7e4b0 79%, #dfe8b2 82%, #dfe8b2 88%, #e8e2ae 91%, #efdfc6 94%, #e9dcb8 97%, #e8d9ae 100%);
	}

	.find {
		display: flex;
		align-items: center;
		box-sizing: border-box;
		width: 273px;
		height: 38px;
		margin: 0 3px 0 17px;
		padding: 0 4px 0 13px;
		border: 1px solid #c3ccd8;
		border-radius: 19px;
		background: #f2f5fa;
	}

	.find > svg:first-child {
		fill: none;
		stroke: #222;
		stroke-width: 2;
	}

	.find input {
		flex: 1;
		margin-left: 12px;
		font-size: 18px;
	}

	.find input::placeholder {
		color: #5a5a5a;
		opacity: 1;
	}

	.app {
		position: relative;
		width: 55px;
		height: 56px;
	}

	.open::after {
		content: '';
		position: absolute;
		bottom: 3px;
		width: 8px;
		height: 4px;
		border-radius: 2px;
		background: #75818a;
	}

	.temp {
		position: absolute;
		left: 24px;
		top: 7px;
		width: 28px;
		height: 20px;
		border-radius: 10px;
		background: #eef2f8;
		font-size: 14px;
	}

	.tray {
		display: flex;
		align-items: center;
		margin-left: auto;
		padding-right: 24px;
	}

	.tray svg {
		fill: none;
		stroke: #1a1a1a;
		stroke-width: 1.4;
	}

	.up path {
		stroke-width: 2;
	}

	.spin .up path {
		stroke-width: 1.5;
	}

	.ime {
		margin: 0 20px 0 23px;
		font-size: 20px;
	}

	.net {
		gap: 10px;
	}

	.clock {
		flex-direction: column;
		align-items: flex-end;
		margin-left: 20px;
		font-size: 15px;
	}

	.bell {
		margin: 0 23px 0 11px;
	}

	.copilot {
		position: relative;
	}

	.copilot span {
		position: absolute;
		left: 6px;
		bottom: 0;
		padding: 0 3px;
		border-radius: 3px;
		background: #fbc600;
		font-size: 10px;
		line-height: 11px;
		font-weight: 700;
	}
</style>
